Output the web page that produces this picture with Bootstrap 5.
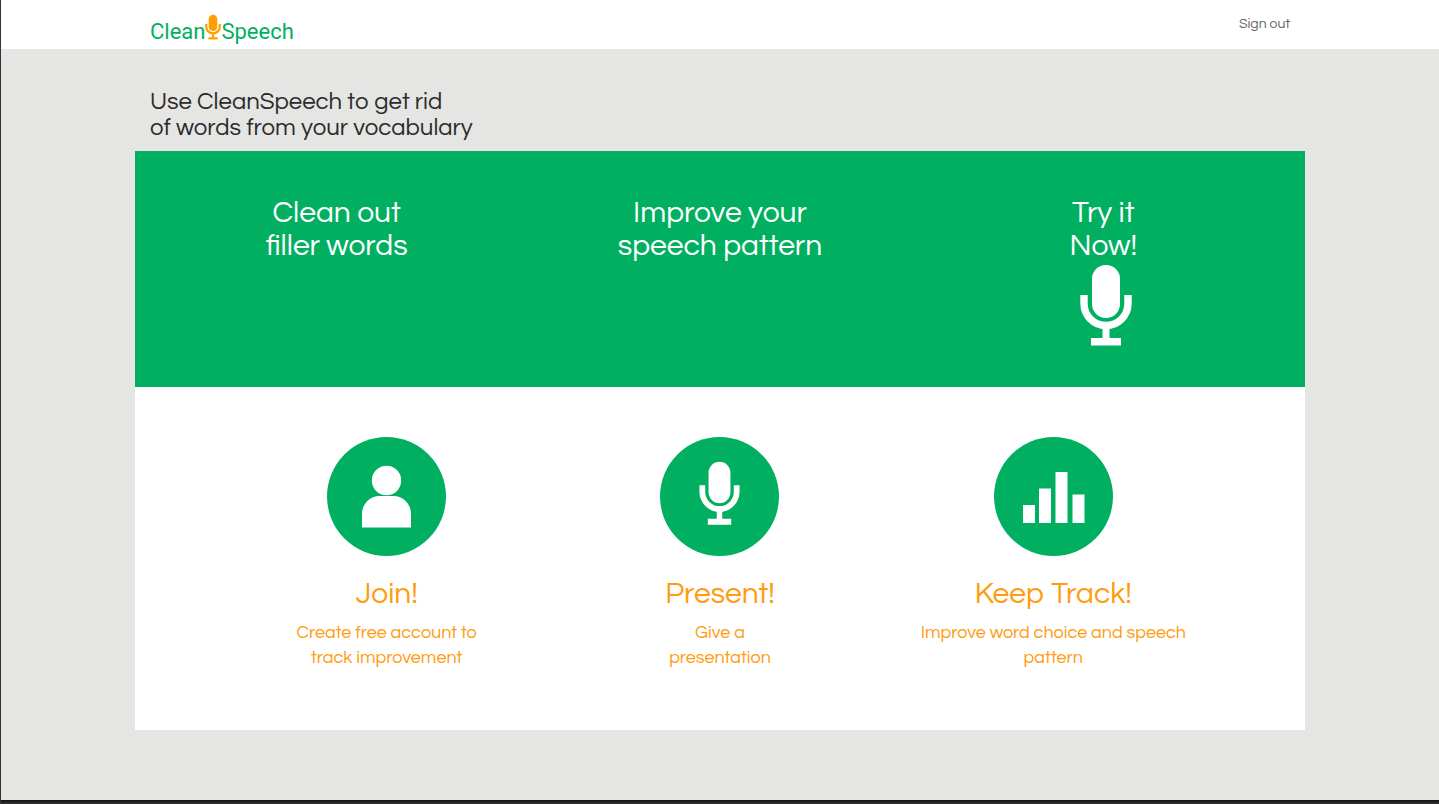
<!DOCTYPE html>
<html lang="en">
<head>
<meta charset="utf-8">
<meta name="viewport" content="width=device-width, initial-scale=1">
<title>CleanSpeech</title>
<link href="https://cdn.jsdelivr.net/npm/bootstrap@5.3.0/dist/css/bootstrap.min.css" rel="stylesheet">
<style>
:root { --green: #00b060; --orange: #ff9c10; }
body { font-family: Questrial, Inter, sans-serif; background: #e5e5e3; color: #2b2b2b; border-left: 1px solid #333; }
.site-width { max-width: 1170px; padding: 0 15px; }
.topbar { min-height: 49px; }
.brand { font-family: Roboto, sans-serif; font-weight: 400; font-size: 22px; line-height: 32px; color: var(--green); }
.brand svg { width: 16px; height: 26px; margin-top: -2px; color: #ffa000; }
.signout { font-size: 14px; line-height: 20px; padding-top: 14px; color: #666; }
.intro { font-size: 24px; line-height: 26px; padding: 40px 15px 10px; margin: 0; }
.hero { background: var(--green); min-height: 236px; padding: 45px 10px 40px; }
.hero h2 { font-size: 30px; line-height: 33px; margin: 0; }
.hero svg { width: 52px; height: 82px; margin: 2px 0 0 6px; }
.steps { padding: 50px 85px 60px; min-height: 343px; color: var(--orange); }
.disc { width: 119px; height: 119px; background: var(--green); }
.steps h3 { font-size: 30px; line-height: 34px; margin: 21px 0 9px; }
.steps p { font-size: 18px; line-height: 25px; margin: 0; }
.bottom-strip { height: 4px; background: linear-gradient(#111, #333); }
</style>
</head>
<body class="min-vh-100 d-flex flex-column">
<svg class="d-none" aria-hidden="true">
  <symbol id="mic" viewBox="0 0 52 82">
    <rect x="12" y="1" width="28" height="53" rx="14" fill="currentColor"/>
    <path d="M4 31v8.5a22 22 0 0 0 44 0V31" fill="none" stroke="currentColor" stroke-width="7.4"/>
    <path d="M22.5 62h7v12H41v7.6H11V74h11.500z" fill="currentColor"/>
  </symbol>
</svg>
<header class="bg-white">
  <nav class="container site-width topbar d-flex justify-content-between align-items-start">
    <a href="#" class="brand d-flex text-decoration-none pt-3" aria-label="CleanSpeech"><span>Clean</span><svg class="flex-shrink-0"><use href="#mic"/></svg><span>Speech</span></a>
    <a href="#" class="signout text-decoration-none">Sign out</a>
  </nav>
</header>
<main class="container site-width px-0 flex-grow-1">
  <h1 class="intro fw-normal">Use CleanSpeech to get rid<br>of words from your vocabulary</h1>
  <section class="hero text-white text-center">
    <div class="row g-0">
      <div class="col-4"><h2>Clean out<br>filler words</h2></div>
      <div class="col-4"><h2>Improve your<br>speech pattern</h2></div>
      <div class="col-4"><h2>Try it<br>Now!</h2><svg aria-hidden="true"><use href="#mic"/></svg></div>
    </div>
  </section>
  <section class="steps bg-white text-center">
    <div class="row g-0">
      <div class="col-4 px-3">
        <div class="disc rounded-circle mx-auto"><svg viewBox="0 0 119 119" fill="#fff" aria-hidden="true"><circle cx="59.500" cy="43.500" r="14.700"/><path d="M35 90.500V77a17.500 18 0 0 1 17.500-18h14A17.500 18 0 0 1 84 77v13.500z"/></svg></div>
        <h3>Join!</h3>
        <p>Create free account to<br>track improvement</p>
      </div>
      <div class="col-4 px-3">
        <div class="disc rounded-circle mx-auto"><svg viewBox="0 0 119 119" class="text-white" aria-hidden="true"><use href="#mic" x="39" y="24" width="41" height="64"/></svg></div>
        <h3>Present!</h3>
        <p>Give a<br>presentation</p>
      </div>
      <div class="col-4 px-3">
        <div class="disc rounded-circle mx-auto"><svg viewBox="0 0 119 119" fill="#fff" aria-hidden="true"><path d="M29 68h12v18H29zM45 51.500h12V86H45zM61.500 35h12v51h-12zM78.500 57.500h12V86h-12z"/></svg></div>
        <h3>Keep Track!</h3>
        <p>Improve word choice and speech pattern</p>
      </div>
    </div>
  </section>
</main>
<footer class="bottom-strip"></footer>
<script src="https://cdn.jsdelivr.net/npm/bootstrap@5.3.0/dist/js/bootstrap.bundle.min.js"></script>
</body>
</html>
